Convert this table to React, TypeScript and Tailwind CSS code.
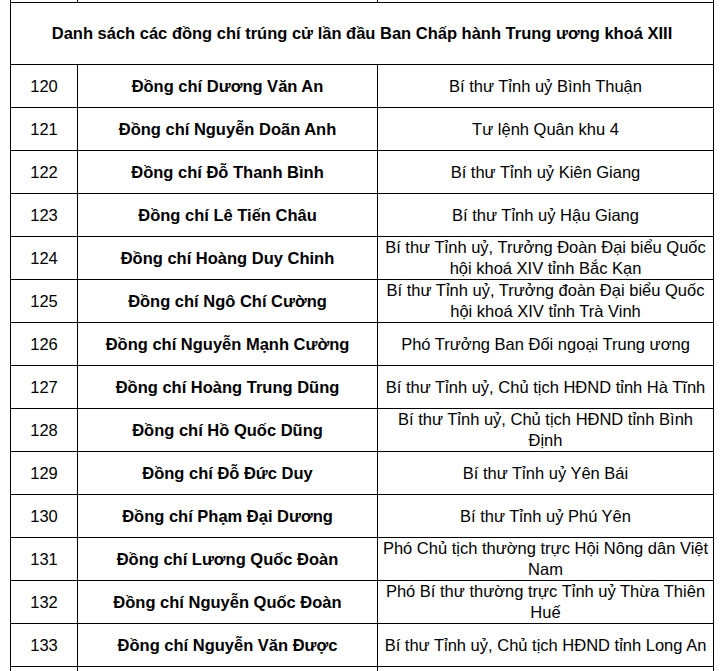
const rows: [string, string, string][] = [
  ['120', 'Đồng chí Dương Văn An', 'Bí thư Tỉnh uỷ Bình Thuận'],
  ['121', 'Đồng chí Nguyễn Doãn Anh', 'Tư lệnh Quân khu 4'],
  ['122', 'Đồng chí Đỗ Thanh Bình', 'Bí thư Tỉnh uỷ Kiên Giang'],
  ['123', 'Đồng chí Lê Tiến Châu', 'Bí thư Tỉnh uỷ Hậu Giang'],
  ['124', 'Đồng chí Hoàng Duy Chinh', 'Bí thư Tỉnh uỷ, Trưởng Đoàn Đại biểu Quốc hội khoá XIV tỉnh Bắc Kạn'],
  ['125', 'Đồng chí Ngô Chí Cường', 'Bí thư Tỉnh uỷ, Trưởng đoàn Đại biểu Quốc hội khoá XIV tỉnh Trà Vinh'],
  ['126', 'Đồng chí Nguyễn Mạnh Cường', 'Phó Trưởng Ban Đối ngoại Trung ương'],
  ['127', 'Đồng chí Hoàng Trung Dũng', 'Bí thư Tỉnh uỷ, Chủ tịch HĐND tỉnh Hà Tĩnh'],
  ['128', 'Đồng chí Hồ Quốc Dũng', 'Bí thư Tỉnh uỷ, Chủ tịch HĐND tỉnh Bình Định'],
  ['129', 'Đồng chí Đỗ Đức Duy', 'Bí thư Tỉnh uỷ Yên Bái'],
  ['130', 'Đồng chí Phạm Đại Dương', 'Bí thư Tỉnh uỷ Phú Yên'],
  ['131', 'Đồng chí Lương Quốc Đoàn', 'Phó Chủ tịch thường trực Hội Nông dân Việt Nam'],
  ['132', 'Đồng chí Nguyễn Quốc Đoàn', 'Phó Bí thư thường trực Tỉnh uỷ Thừa Thiên Huế'],
  ['133', 'Đồng chí Nguyễn Văn Được', 'Bí thư Tỉnh uỷ, Chủ tịch HĐND tỉnh Long An'],
];

function Row({ cells, className }: { cells: [string, string, string]; className: string }) {
  return (
    <div className={`grid grid-cols-[67px_300px_1fr] border-b border-black ${className}`}>
      <div className="flex items-center justify-center border-r border-black">{cells[0]}</div>
      <div className="flex items-center justify-center border-r border-black px-[3px] text-center font-bold">
        {cells[1]}
      </div>
      <div className="flex items-center justify-center px-[3px] text-center">{cells[2]}</div>
    </div>
  );
}

export default function App() {
  return (
    <div
      className="h-[671px] overflow-hidden bg-white text-[16.5px] leading-[21px] text-black"
      style={{ fontFamily: '"Liberation Sans", Arial, sans-serif' }}
    >
      <div className="ml-[10px] w-[704px] border-x border-black">
        {/* tail of the previous row */}
        <Row cells={['', '', '']} className="h-[3px]" />

        {/* Title */}
        <div className="flex h-[62px] items-center justify-center border-b border-black text-[16.5px] font-bold">
          Danh sách các đồng chí trúng cử lần đầu Ban Chấp hành Trung ương khoá XIII
        </div>

        {rows.map((r) => (
          <Row key={r[0]} cells={r} className="h-[43px]" />
        ))}

        {/* start of the next row */}
        <Row cells={['', '', '']} className="h-[43px]" />
      </div>
    </div>
  );
}
